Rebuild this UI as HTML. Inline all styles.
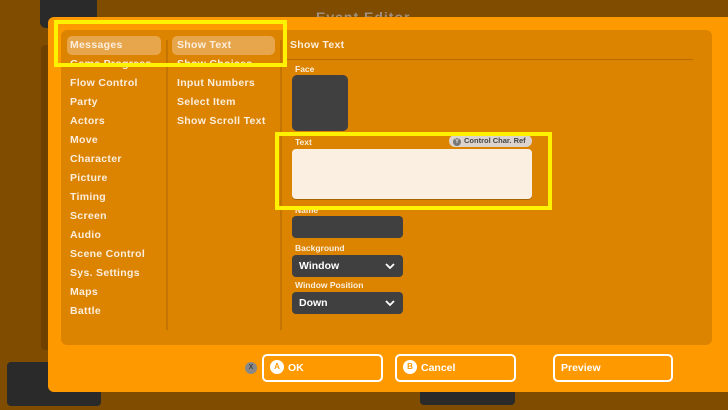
<!DOCTYPE html>
<html><head><style>
*{margin:0;padding:0;box-sizing:border-box}
body{width:728px;height:410px;background:#7f4c00;position:relative;overflow:hidden;font-family:"Liberation Sans",sans-serif;color:#fbeedd}
.a{position:absolute}
.m{font-size:10.5px;letter-spacing:.3px;font-weight:bold;color:#fbeedd}
.dd{background:#404040;border-radius:4px;color:#fff;font-size:10.5px;font-weight:bold;padding:0 7px;line-height:22px}
.lab{font-size:8.5px;font-weight:bold;color:#fbeedd}
.btn{border:2px solid #fff;border-radius:5px;height:28px;top:354px;font-size:10.5px;font-weight:bold;color:#fff;line-height:24px;padding-left:6px}
.ci{display:inline-block;width:14px;height:14px;border-radius:50%;background:#fff;color:#ff9900;font-size:8px;text-align:center;line-height:14px;vertical-align:middle;margin-right:4px;margin-top:-2px}
.chev{position:absolute;right:8px;top:7px}
</style></head><body>
<div class="a" style="left:40px;top:-6px;width:57px;height:34px;background:#2a2a2a;border-radius:6px"></div>
<div class="a" style="left:41px;top:45px;width:10px;height:305px;background:#6e4100;border-radius:4px"></div>
<div class="a" style="left:7px;top:362px;width:94px;height:44px;background:#2a2a2a;border-radius:4px"></div>
<div class="a" style="left:420px;top:385px;width:95px;height:20px;background:#2a2a2a;border-radius:4px"></div>
<div class="a" style="left:316px;top:9px;font-size:14px;font-weight:bold;color:#a09080;letter-spacing:1px">Event Editor</div>
<div class="a" style="left:48px;top:17px;width:690px;height:375px;background:#ff9900;border-radius:6px"></div>
<div class="a" style="left:61px;top:30px;width:651px;height:315px;background:#dc8400;border-radius:6px"></div>
<div class="a" style="left:166px;top:40px;width:2px;height:290px;background:#c47400"></div>
<div class="a" style="left:280px;top:40px;width:2px;height:290px;background:#c47400"></div>
<div class="a" style="left:285px;top:59px;width:408px;height:1px;background:#b86c00"></div>
<div class="a" style="left:67px;top:36px;width:94px;height:19px;background:#e8a64c;border-radius:5px"></div>
<div class="a" style="left:172px;top:36px;width:103px;height:19px;background:#e8a64c;border-radius:5px"></div>
<div class="a m" style="left:70px;top:36px;line-height:19px">Messages<br>Game Progress<br>Flow Control<br>Party<br>Actors<br>Move<br>Character<br>Picture<br>Timing<br>Screen<br>Audio<br>Scene Control<br>Sys. Settings<br>Maps<br>Battle</div>
<div class="a m" style="left:177px;top:36px;line-height:19px">Show Text<br>Show Choices<br>Input Numbers<br>Select Item<br>Show Scroll Text</div>
<div class="a m" style="left:290px;top:38px;line-height:14px">Show Text</div>
<div class="a lab" style="left:295px;top:64px">Face</div>
<div class="a" style="left:292px;top:75px;width:56px;height:56px;background:#404040;border-radius:5px"></div>
<div class="a lab" style="left:295px;top:137px">Text</div>
<div class="a" style="left:449px;top:135px;width:83px;height:12px;background:#dcd4cc;border-radius:6px;font-size:7.5px;color:#444;font-weight:bold;line-height:12px;padding-left:4px"><span style="display:inline-block;width:8px;height:8px;border-radius:50%;background:#777;color:#ddd;font-size:6px;text-align:center;line-height:8px;margin-right:3px">Y</span>Control Char. Ref</div>
<div class="a" style="left:292px;top:149px;width:240px;height:50px;background:#fbefe1;border-radius:4px;box-shadow:0 1px 0 #a86400"></div>
<div class="a lab" style="left:295px;top:205px">Name</div>
<div class="a" style="left:292px;top:216px;width:111px;height:22px;background:#404040;border-radius:4px"></div>
<div class="a lab" style="left:295px;top:243px">Background</div>
<div class="a dd" style="left:292px;top:255px;width:111px;height:22px">Window<svg class="chev" width="10" height="8" viewBox="0 0 10 8"><path d="M1 2 L5 6 L9 2" stroke="#fff" stroke-width="1.8" fill="none"/></svg></div>
<div class="a lab" style="left:295px;top:280px">Window Position</div>
<div class="a dd" style="left:292px;top:292px;width:111px;height:22px">Down<svg class="chev" width="10" height="8" viewBox="0 0 10 8"><path d="M1 2 L5 6 L9 2" stroke="#fff" stroke-width="1.8" fill="none"/></svg></div>
<div class="a" style="left:54px;top:20px;width:233px;height:47px;border:4px solid #fff200"></div>
<div class="a" style="left:275px;top:132px;width:277px;height:78px;border:4px solid #fff200"></div>
<div class="a" style="left:245px;top:362px;width:12px;height:12px;border-radius:50%;background:#888;color:#444;font-size:7px;text-align:center;line-height:12px;font-weight:bold">X</div>
<div class="a btn" style="left:262px;width:121px"><span class="ci">A</span>OK</div>
<div class="a btn" style="left:395px;width:121px"><span class="ci">B</span>Cancel</div>
<div class="a btn" style="left:553px;width:120px">Preview</div>
</body></html>
